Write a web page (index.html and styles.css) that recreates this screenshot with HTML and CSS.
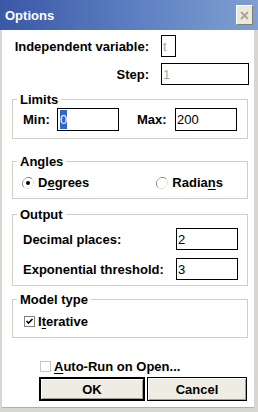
FILE: index.html
```html
<!DOCTYPE html>
<html>
<head>
<meta charset="utf-8">
<link rel="stylesheet" href="styles.css">
</head>
<body>
<div class="window">
  <div class="titlebar">
    <span class="title">Options</span>
    <span class="close"><svg width="9" height="9" viewBox="0 0 9 9"><path d="M1 1L8 8M8 1L1 8" stroke="#a8a8a0" stroke-width="2"/></svg></span>
  </div>
  <div class="frame">
    <div class="vars">
      <span class="lbl">Independent variable:</span>
      <span class="field small disabled">t</span>
      <span class="lbl">Step:</span>
      <span class="field step disabled">1</span>
    </div>

    <fieldset class="group limits">
      <legend>Limits</legend>
      <div class="limrow">
        <span class="minlbl">Min:</span>
        <span class="field num"><span class="sel">0</span></span>
        <span class="maxlbl">Max:</span>
        <span class="field num">200</span>
      </div>
    </fieldset>

    <fieldset class="group angles">
      <legend>Angles</legend>
      <div class="radrow">
        <span class="opt deg"><svg class="radio" width="12" height="12" viewBox="0 0 12 12"><path d="M10.2 1.8A6 6 0 0 0 1.8 10.2" fill="none" stroke="#808080"/><path d="M1.8 10.2A6 6 0 0 0 10.2 1.8" fill="none" stroke="#dcdcdc"/><circle cx="6" cy="6" r="5" fill="#fff"/><circle cx="6" cy="6" r="2" fill="#000"/></svg>D<u>e</u>grees</span>
        <span class="opt rad"><svg class="radio" width="12" height="12" viewBox="0 0 12 12"><path d="M10.2 1.8A6 6 0 0 0 1.8 10.2" fill="none" stroke="#808080"/><path d="M1.8 10.2A6 6 0 0 0 10.2 1.8" fill="none" stroke="#dcdcdc"/><circle cx="6" cy="6" r="5" fill="#fff"/></svg>Radia<u>n</u>s</span>
      </div>
    </fieldset>

    <fieldset class="group output">
      <legend>Output</legend>
      <div class="outrow">
        <span>Decimal places:</span>
        <span class="field num">2</span>
      </div>
      <div class="outrow second">
        <span>Exponential threshold:</span>
        <span class="field num">3</span>
      </div>
    </fieldset>

    <fieldset class="group model">
      <legend>Model type</legend>
      <div class="chkrow">
        <svg class="check" width="11" height="11" viewBox="0 0 11 11"><rect x="0.5" y="0.5" width="10" height="10" fill="#fff" stroke="#808080"/><path d="M2.5 5L4.5 7L8.5 3" fill="none" stroke="#000" stroke-width="1.6"/></svg>
        <span>I<u>t</u>erative</span>
      </div>
    </fieldset>

    <div class="autorun">
      <svg class="check" width="11" height="11" viewBox="0 0 11 11"><rect x="0.5" y="0.5" width="10" height="10" fill="#fff" stroke="#c8c8c8"/></svg>
      <span><u>A</u>uto-Run on Open...</span>
    </div>

    <div class="buttons">
      <button class="btn ok">OK</button>
      <button class="btn cancel">Cancel</button>
    </div>
  </div>
</div>
</body>
</html>
```

FILE: styles.css
```css
html, body {
  margin: 0;
  padding: 0;
  background: #ffffff;
}

.window {
  width: 258px;
  height: 412px;
  display: flex;
  flex-direction: column;
  font: bold 13px/15px "Liberation Sans", Arial, sans-serif;
  color: #000;
}

.titlebar {
  height: 30px;
  flex: none;
  background: linear-gradient(to right, #3a58a6, #5c7dc0 50%, #7f9fd2);
  display: flex;
  align-items: flex-start;
  justify-content: space-between;
}

.title {
  color: #fff;
  margin: 8px 0 0 5px;
}

.close {
  width: 17px;
  height: 20px;
  margin: 5px 5px 0 0;
  box-sizing: border-box;
  background: #ece9d8;
  border-top: 1px solid #fff;
  border-left: 1px solid #fff;
  border-right: 1px solid #808080;
  border-bottom: 1px solid #808080;
  display: flex;
  align-items: center;
  justify-content: center;
}

.frame {
  flex: 1;
  box-sizing: border-box;
  background: #ffffff;
  border-left: 2px solid #d8d6d0;
  border-right: 4px solid #d8d6d0;
  border-bottom: 4px solid #d8d6d0;
  box-shadow: inset 0 -1px 0 #b0b0a8;
  padding: 5px 0 0 10px;
  display: flex;
  flex-direction: column;
}

.vars {
  display: grid;
  grid-template-columns: 137px auto;
  column-gap: 12px;
  row-gap: 6px;
  align-items: center;
  justify-items: start;
}

.vars .lbl {
  justify-self: end;
}

.field {
  box-sizing: border-box;
  height: 22px;
  border: 1px solid #000;
  background: #fff;
  font-weight: normal;
  display: flex;
  align-items: center;
  padding-left: 1px;
}

.field.disabled {
  color: #a8a8a0;
}

.field.small {
  width: 15px;
}

.field.step {
  width: 88px;
}

.field.num {
  width: 62px;
}

.sel {
  background: #3168c4;
  color: #fff;
  padding: 2px 0;
  margin-left: 1px;
}

.group {
  margin: 0;
  width: 236px;
  box-sizing: border-box;
  border: 1px solid #d0d0c8;
  padding: 0 9px 7px 4px;
  min-width: 0;
}

.group legend {
  padding: 0 3px;
  font: bold 13px/15px "Liberation Sans", Arial, sans-serif;
}

.limits {
  margin-top: 7px;
}

.limrow {
  display: flex;
  align-items: center;
  margin-top: 1px;
  padding-left: 6px;
}

.limrow .field {
  height: 23px;
}

.minlbl {
  width: 34px;
}

.maxlbl {
  width: 38px;
  margin-left: 18px;
}

.angles {
  margin-top: 15px;
}

.radrow {
  display: flex;
  align-items: center;
  height: 17px;
  margin-top: 5px;
}

.opt {
  display: flex;
  align-items: center;
}

.opt .radio {
  margin-right: 4px;
}

.deg {
  margin-left: 5px;
}

.rad {
  margin-left: 67px;
}

u {
  text-decoration: underline;
  text-underline-offset: 2px;
}

.output {
  margin-top: 8px;
  padding-bottom: 5px;
}

.outrow {
  display: flex;
  align-items: center;
  justify-content: space-between;
  padding-left: 6px;
  margin-top: 6px;
}

.outrow.second {
  margin-top: 8px;
}

.model {
  margin-top: 6px;
  padding-bottom: 8px;
}

.chkrow {
  display: flex;
  align-items: center;
  height: 15px;
  margin-top: 7px;
  padding-left: 7px;
}

.chkrow .check {
  margin-right: 3px;
}

.autorun {
  display: flex;
  align-items: center;
  height: 16px;
  margin-top: 20px;
  margin-left: 28px;
}

.autorun .check {
  margin-right: 3px;
}

.buttons {
  display: flex;
  gap: 2px;
  margin-top: 3px;
  margin-left: 27px;
}

.btn {
  height: 24px;
  box-sizing: border-box;
  background: #efede3;
  border: 1px solid #000;
  box-shadow: inset 1px 1px 0 #fff, inset -1px -1px 0 #a0a098;
  font: bold 13px/15px "Liberation Sans", Arial, sans-serif;
  color: #000;
  padding: 0;
}

.ok {
  width: 106px;
  border-width: 2px;
}

.cancel {
  width: 100px;
}
```
